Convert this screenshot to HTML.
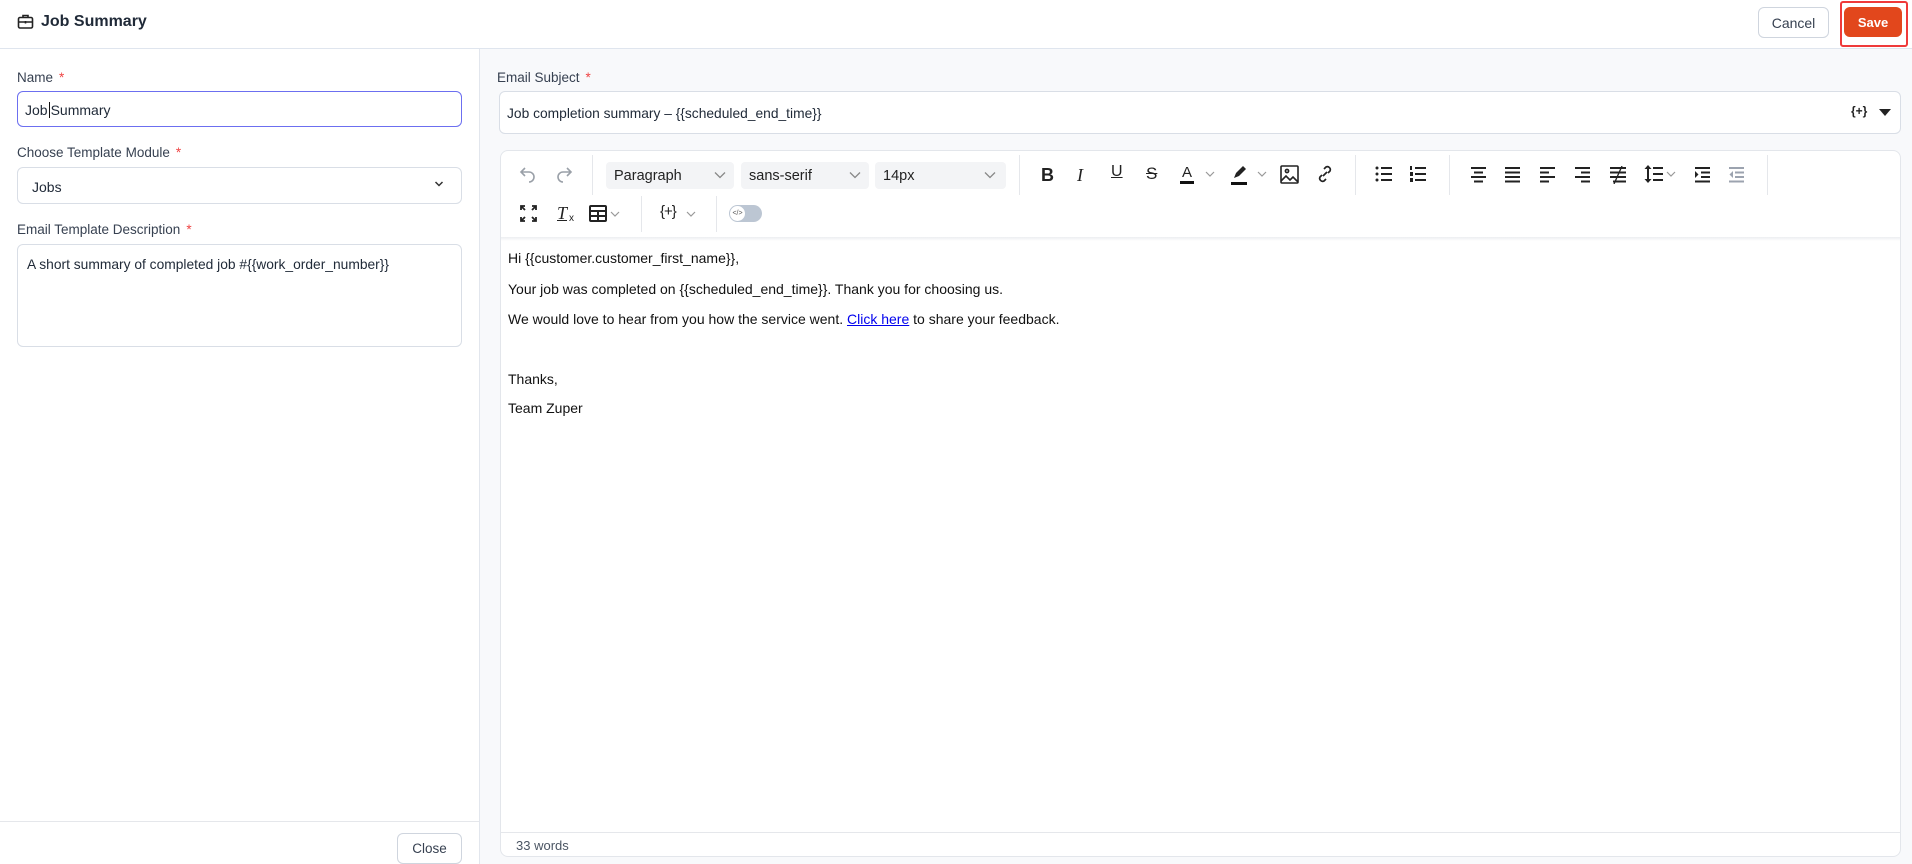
<!DOCTYPE html>
<html><head><meta charset="utf-8"><style>
*{box-sizing:border-box;margin:0;padding:0}
body{width:1912px;height:864px;overflow:hidden;font-family:"Liberation Sans",sans-serif;color:#1f2937;background:#fff;position:relative}
.abs{position:absolute}
.hdr{left:0;top:0;width:1912px;height:49px;border-bottom:1px solid #dfe5ee;background:#fff}
.btn{position:absolute;border-radius:6px;font-size:14px;display:flex;align-items:center;justify-content:center}
.lbl{position:absolute;font-size:13.5px;color:#374151}
.lbl b{color:#ef4444;font-weight:normal;margin-left:6px}
.inp{position:absolute;border:1px solid #d9dee6;border-radius:6px;background:#fff;font-size:14px;color:#1f2937}
.sep{position:absolute;width:1px;background:#e5e7eb}
.ic{position:absolute}
.sel{position:absolute;top:162px;height:27px;background:#f3f4f6;border-radius:4px;font-size:14.5px;padding:6px 0 0 8px;color:#222}
.p{position:absolute;left:508px;font-size:14px;color:#111}
</style></head><body>
<div class="abs hdr"></div>
<svg class="ic" style="left:17px;top:13px" width="17" height="17" viewBox="0 0 17 17" fill="none" stroke="#222" stroke-width="1.6"><rect x="1.5" y="4.5" width="14" height="10.5" rx="1.5"/><path d="M6 4.5V2.5h5v2M1.5 9h14M8.5 8v2.5"/></svg>
<div class="abs" style="left:41px;top:13px;font-size:16px;font-weight:bold;color:#1f2937">Job Summary</div>
<div class="btn" style="left:1758px;top:7px;width:71px;height:31px;border:1px solid #cfd5de;color:#374151">Cancel</div>
<div class="abs" style="left:1840px;top:1px;width:68px;height:46px;border:2px solid #ef3a3a;border-radius:3px"></div>
<div class="btn" style="left:1844px;top:7px;width:58px;height:30px;background:#e2471c;color:#fff;font-weight:bold;font-size:13px">Save</div>

<div class="abs" style="left:479px;top:49px;width:1433px;height:815px;background:#f8f9fb;border-left:1px solid #e2e6ed"></div>

<div class="lbl" style="left:17px;top:70px">Name<b>*</b></div>
<div class="inp" style="left:17px;top:91px;width:445px;height:36px;border-color:#6c6ff0;padding:10px 0 0 7px">Job<span style="border-left:1px solid #111;margin:0 1px"></span>Summary</div>
<div class="lbl" style="left:17px;top:145px">Choose Template Module<b>*</b></div>
<div class="inp" style="left:17px;top:167px;width:445px;height:37px;padding:11px 0 0 14px">Jobs</div>
<svg class="ic" style="left:434px;top:180px" width="10" height="8" viewBox="0 0 10 8" fill="none" stroke="#333" stroke-width="1.5"><path d="M1.5 2l3.5 3.5L8.5 2"/></svg>
<div class="lbl" style="left:17px;top:222px">Email Template Description<b>*</b></div>
<div class="inp" style="left:17px;top:244px;width:445px;height:103px;padding:12px 0 0 9px;font-size:13.8px">A short summary of completed job #{{work_order_number}}</div>
<div class="abs" style="left:0;top:821px;width:479px;height:1px;background:#e5e7eb"></div>
<div class="btn" style="left:397px;top:833px;width:65px;height:31px;border:1px solid #cfd5de;color:#374151;font-size:13.5px">Close</div>

<div class="lbl" style="left:497px;top:70px">Email Subject<b>*</b></div>
<div class="inp" style="left:499px;top:91px;width:1402px;height:43px;padding:14px 0 0 7px;font-size:13.8px">Job completion summary – {{scheduled_end_time}}</div>
<div class="abs" style="left:1851px;top:104px;font-size:12px;font-weight:bold;color:#222">{+}</div>
<svg class="ic" style="left:1879px;top:109px" width="12" height="7" viewBox="0 0 12 7"><path d="M0 0h12L6 7z" fill="#222"/></svg>

<div class="abs" style="left:500px;top:150px;width:1401px;height:707px;background:#fff;border:1px solid #e3e6eb;border-radius:8px"></div>
<div class="abs" style="left:501px;top:237px;width:1399px;height:4px;background:linear-gradient(#eceef1,#fff)"></div>

<svg class="ic" style="left:518px;top:164px" width="20" height="20" viewBox="0 0 20 20" fill="none" stroke="#9aa0a8" stroke-width="1.6"><path d="M7 4L3 8l4 4M3 8h8a5 5 0 010 10"/></svg>
<svg class="ic" style="left:554px;top:164px" width="20" height="20" viewBox="0 0 20 20" fill="none" stroke="#9aa0a8" stroke-width="1.6"><path d="M13 4l4 4-4 4M17 8H9a5 5 0 000 10"/></svg>
<div class="sep" style="left:592px;top:155px;height:40px"></div>
<div class="sel" style="left:606px;width:128px">Paragraph</div>
<div class="sel" style="left:741px;width:128px">sans-serif</div>
<div class="sel" style="left:875px;width:131px">14px</div>
<svg class="ic" style="left:714px;top:171px" width="12" height="8" viewBox="0 0 12 8" fill="none" stroke="#888" stroke-width="1.3"><path d="M1 1.5l5 5 5-5"/></svg>
<svg class="ic" style="left:849px;top:171px" width="12" height="8" viewBox="0 0 12 8" fill="none" stroke="#888" stroke-width="1.3"><path d="M1 1.5l5 5 5-5"/></svg>
<svg class="ic" style="left:984px;top:171px" width="12" height="8" viewBox="0 0 12 8" fill="none" stroke="#888" stroke-width="1.3"><path d="M1 1.5l5 5 5-5"/></svg>
<div class="sep" style="left:1019px;top:155px;height:40px"></div>
<div class="abs" style="left:1041px;top:165px;font-size:18px;font-weight:bold;color:#222">B</div>
<div class="abs" style="left:1077px;top:165px;font-size:18px;font-style:italic;font-family:'Liberation Serif',serif;color:#222">I</div>
<div class="abs" style="left:1111px;top:163px;font-size:16px;text-decoration:underline;color:#222">U</div>
<div class="abs" style="left:1146px;top:164px;font-size:17px;text-decoration:line-through;color:#222">S</div>
<div class="abs" style="left:1180px;top:164px;font-size:15px;color:#222;border-bottom:3px solid #111;line-height:17px;padding:0 2px">A</div>
<svg class="ic" style="left:1205px;top:171px" width="10" height="7" viewBox="0 0 10 7" fill="none" stroke="#999" stroke-width="1.2"><path d="M1 1l4 4 4-4"/></svg>
<svg class="ic" style="left:1229px;top:164px" width="20" height="22" viewBox="0 0 20 22"><path d="M5 14l2-5 7-7 3 3-7 7z" fill="#222"/><rect x="2" y="18" width="16" height="3" fill="#111"/></svg>
<svg class="ic" style="left:1257px;top:171px" width="10" height="7" viewBox="0 0 10 7" fill="none" stroke="#999" stroke-width="1.2"><path d="M1 1l4 4 4-4"/></svg>
<svg class="ic" style="left:1280px;top:165px" width="19" height="19" viewBox="0 0 19 19" fill="none" stroke="#222" stroke-width="1.6"><rect x="1" y="1" width="17" height="17" rx="1"/><circle cx="7" cy="6" r="1.6"/><path d="M1 16l5-5 4 4 3-3 5 5"/></svg>
<svg class="ic" style="left:1315px;top:164px" width="20" height="20" viewBox="0 0 20 20" fill="none" stroke="#222" stroke-width="1.7"><path d="M8 12l4-4M9 5l2-2a3 3 0 014 4l-2 2M11 15l-2 2a3 3 0 01-4-4l2-2"/></svg>
<div class="sep" style="left:1355px;top:155px;height:40px"></div>
<svg class="ic" style="left:1375px;top:166px" width="18" height="16" viewBox="0 0 18 16" fill="#222"><circle cx="2" cy="2" r="1.5"/><circle cx="2" cy="8" r="1.5"/><circle cx="2" cy="14" r="1.5"/><rect x="6" y="1" width="11" height="2"/><rect x="6" y="7" width="11" height="2"/><rect x="6" y="13" width="11" height="2"/></svg>
<svg class="ic" style="left:1409px;top:166px" width="18" height="16" viewBox="0 0 18 16" fill="#222"><rect x="1" y="0" width="2" height="4"/><rect x="1" y="6" width="3" height="4"/><rect x="1" y="12" width="3" height="4"/><rect x="6" y="1" width="11" height="2"/><rect x="6" y="7" width="11" height="2"/><rect x="6" y="13" width="11" height="2"/></svg>
<div class="sep" style="left:1449px;top:155px;height:40px"></div>
<svg class="ic" style="left:1470px;top:167px" width="17" height="16" viewBox="0 0 17 16" fill="#222"><rect x="1" y="0" width="15" height="2"/><rect x="4" y="4.5" width="9" height="2"/><rect x="1" y="9" width="15" height="2"/><rect x="4" y="13.5" width="9" height="2"/></svg>
<svg class="ic" style="left:1504px;top:167px" width="17" height="16" viewBox="0 0 17 16" fill="#222"><rect x="1" y="0" width="15" height="2"/><rect x="1" y="4.5" width="15" height="2"/><rect x="1" y="9" width="15" height="2"/><rect x="1" y="13.5" width="15" height="2"/></svg>
<svg class="ic" style="left:1539px;top:167px" width="17" height="16" viewBox="0 0 17 16" fill="#222"><rect x="1" y="0" width="15" height="2"/><rect x="1" y="4.5" width="9" height="2"/><rect x="1" y="9" width="15" height="2"/><rect x="1" y="13.5" width="9" height="2"/></svg>
<svg class="ic" style="left:1574px;top:167px" width="17" height="16" viewBox="0 0 17 16" fill="#222"><rect x="1" y="0" width="15" height="2"/><rect x="7" y="4.5" width="9" height="2"/><rect x="1" y="9" width="15" height="2"/><rect x="7" y="13.5" width="9" height="2"/></svg>
<svg class="ic" style="left:1609px;top:166px" width="18" height="18" viewBox="0 0 18 18" fill="#222"><rect x="1" y="1" width="16" height="2"/><rect x="1" y="5.5" width="16" height="2"/><rect x="1" y="10" width="16" height="2"/><rect x="4" y="14.5" width="13" height="2"/><path d="M13 0L5 18" stroke="#222" stroke-width="1.3"/></svg>
<svg class="ic" style="left:1644px;top:164px" width="20" height="20" viewBox="0 0 20 20" fill="#222"><path d="M4 1l3.5 4h-2.5v10h2.5L4 19 0.5 15H3V5H0.5z"/><rect x="9" y="3" width="10" height="2"/><rect x="9" y="9" width="10" height="2"/><rect x="9" y="15" width="10" height="2"/></svg>
<svg class="ic" style="left:1666px;top:171px" width="10" height="7" viewBox="0 0 10 7" fill="none" stroke="#999" stroke-width="1.2"><path d="M1 1l4 4 4-4"/></svg>
<svg class="ic" style="left:1694px;top:167px" width="17" height="16" viewBox="0 0 17 16" fill="#222"><rect x="1" y="0" width="15" height="2"/><rect x="7" y="4.5" width="9" height="2"/><rect x="7" y="9" width="9" height="2"/><rect x="1" y="13.5" width="15" height="2"/><path d="M1 4l3.5 3.5L1 11z"/></svg>
<svg class="ic" style="left:1728px;top:167px" width="17" height="16" viewBox="0 0 17 16" fill="#9ca3af"><rect x="1" y="0" width="15" height="2"/><rect x="7" y="4.5" width="9" height="2"/><rect x="7" y="9" width="9" height="2"/><rect x="1" y="13.5" width="15" height="2"/><path d="M5 4L1.5 7.5 5 11z"/></svg>
<div class="sep" style="left:1767px;top:155px;height:40px"></div>
<svg class="ic" style="left:520px;top:205px" width="17" height="17" viewBox="0 0 17 17" fill="none" stroke="#222" stroke-width="1.8"><path d="M1 5V1h4M1 1l4 4M12 1h4v4M16 1l-4 4M1 12v4h4M1 16l4-4M16 12v4h-4M16 16l-4-4"/></svg>
<div class="abs" style="left:557px;top:203px;font-size:18px;font-style:italic;font-family:'Liberation Serif',serif;color:#222;text-decoration:underline">T</div>
<div class="abs" style="left:569px;top:213px;font-size:10px;color:#222">x</div>
<svg class="ic" style="left:589px;top:205px" width="18" height="17" viewBox="0 0 18 17" fill="none" stroke="#222" stroke-width="2"><rect x="1" y="1" width="16" height="15" rx="1"/><path d="M1 6h16M9 6v10M1 11h16"/></svg>
<svg class="ic" style="left:610px;top:211px" width="10" height="7" viewBox="0 0 10 7" fill="none" stroke="#999" stroke-width="1.2"><path d="M1 1l4 4 4-4"/></svg>
<div class="sep" style="left:641px;top:196px;height:36px"></div>
<div class="abs" style="left:660px;top:203px;font-size:15px;color:#222;letter-spacing:-1px">{+}</div>
<svg class="ic" style="left:686px;top:211px" width="10" height="7" viewBox="0 0 10 7" fill="none" stroke="#999" stroke-width="1.2"><path d="M1 1l4 4 4-4"/></svg>
<div class="sep" style="left:716px;top:196px;height:36px"></div>
<div class="abs" style="left:729px;top:205px;width:33px;height:17px;border-radius:9px;background:#bcc6d3"></div>
<div class="abs" style="left:730px;top:206px;width:15px;height:15px;border-radius:50%;background:#fff;font-size:7px;text-align:center;line-height:15px;color:#555">&lt;/&gt;</div>

<div class="p" style="top:250px">Hi {{customer.customer_first_name}},</div>
<div class="p" style="top:281px">Your job was completed on {{scheduled_end_time}}. Thank you for choosing us.</div>
<div class="p" style="top:311px">We would love to hear from you how the service went. <span style="color:#0000ee;text-decoration:underline">Click here</span> to share your feedback.</div>
<div class="p" style="top:371px">Thanks,</div>
<div class="p" style="top:400px">Team Zuper</div>

<div class="abs" style="left:501px;top:832px;width:1399px;height:1px;background:#e5e7eb"></div>
<div class="abs" style="left:516px;top:838px;font-size:13px;color:#4b5563">33 words</div>
</body></html>
